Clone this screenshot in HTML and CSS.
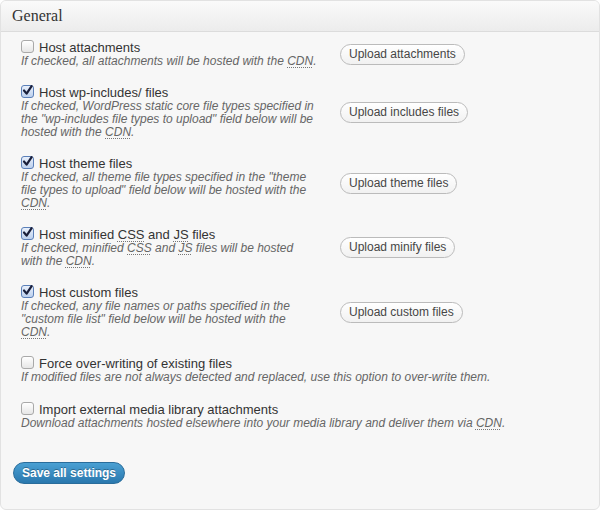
FILE: index.html
```html
<!DOCTYPE html>
<html>
<head>
<meta charset="utf-8">
<link rel="stylesheet" href="styles.css">
</head>
<body>
<div class="postbox">
  <h3 class="hndle">General</h3>
  <div class="inside">
    <div class="row">
      <div class="opt">
        <label class="lbl"><span class="cb"></span>Host attachments</label>
        <div class="desc">If checked, all attachments will be hosted with the <abbr>CDN</abbr>.</div>
      </div>
      <div class="act"><button class="btn">Upload attachments</button></div>
    </div>
    <div class="row">
      <div class="opt">
        <label class="lbl"><span class="cb on"><svg viewBox="0 0 13 13" width="13" height="13"><path d="M3 6.5 L5.6 9.6 L10.6 2.2" fill="none" stroke="#1a1f3a" stroke-width="2.2" stroke-linecap="round" stroke-linejoin="round"/></svg></span>Host wp-includes/ files</label>
        <div class="desc">If checked, WordPress static core file types specified in the "wp-includes file types to upload" field below will be hosted with the <abbr>CDN</abbr>.</div>
      </div>
      <div class="act"><button class="btn">Upload includes files</button></div>
    </div>
    <div class="row">
      <div class="opt">
        <label class="lbl"><span class="cb on"><svg viewBox="0 0 13 13" width="13" height="13"><path d="M3 6.5 L5.6 9.6 L10.6 2.2" fill="none" stroke="#1a1f3a" stroke-width="2.2" stroke-linecap="round" stroke-linejoin="round"/></svg></span>Host theme files</label>
        <div class="desc">If checked, all theme file types specified in the "theme file types to upload" field below will be hosted with the <abbr>CDN</abbr>.</div>
      </div>
      <div class="act"><button class="btn">Upload theme files</button></div>
    </div>
    <div class="row">
      <div class="opt">
        <label class="lbl"><span class="cb on"><svg viewBox="0 0 13 13" width="13" height="13"><path d="M3 6.5 L5.6 9.6 L10.6 2.2" fill="none" stroke="#1a1f3a" stroke-width="2.2" stroke-linecap="round" stroke-linejoin="round"/></svg></span>Host minified <abbr>CSS</abbr> and <abbr>JS</abbr> files</label>
        <div class="desc">If checked, minified <abbr>CSS</abbr> and <abbr>JS</abbr> files will be hosted with the <abbr>CDN</abbr>.</div>
      </div>
      <div class="act"><button class="btn">Upload minify files</button></div>
    </div>
    <div class="row">
      <div class="opt">
        <label class="lbl"><span class="cb on"><svg viewBox="0 0 13 13" width="13" height="13"><path d="M3 6.5 L5.6 9.6 L10.6 2.2" fill="none" stroke="#1a1f3a" stroke-width="2.2" stroke-linecap="round" stroke-linejoin="round"/></svg></span>Host custom files</label>
        <div class="desc">If checked, any file names or paths specified in the "custom file list" field below will be hosted with the <abbr>CDN</abbr>.</div>
      </div>
      <div class="act"><button class="btn">Upload custom files</button></div>
    </div>
    <div class="row full">
      <div class="opt">
        <label class="lbl"><span class="cb"></span>Force over-writing of existing files</label>
        <div class="desc">If modified files are not always detected and replaced, use this option to over-write them.</div>
      </div>
    </div>
    <div class="row full">
      <div class="opt">
        <label class="lbl"><span class="cb"></span>Import external media library attachments</label>
        <div class="desc">Download attachments hosted elsewhere into your media library and deliver them via <abbr>CDN</abbr>.</div>
      </div>
    </div>
    <div class="submit">
      <button class="btn-primary">Save all settings</button>
    </div>
  </div>
</div>
</body>
</html>
```
FILE: styles.css
```css
html, body {
  margin: 0;
  padding: 0;
  background: #ffffff;
}
body {
  font-family: "Liberation Sans", Arial, sans-serif;
  color: #333;
}
.postbox {
  box-sizing: border-box;
  width: 600px;
  height: 510px;
  border: 1px solid #e2e2e2;
  border-radius: 6px;
  background: #f7f7f7;
  overflow: hidden;
}
.hndle {
  margin: 0;
  height: 30px;
  line-height: 30px;
  padding-left: 11px;
  font-family: "Liberation Serif", Georgia, serif;
  font-size: 16px;
  font-weight: normal;
  color: #333;
  background: linear-gradient(to bottom, #fafafa, #ececec);
  border-bottom: 1px solid #dcdcdc;
}
.inside {
  padding: 0 0 0 20px;
}
.row {
  display: grid;
  grid-template-columns: 295px auto;
  column-gap: 24px;
  align-items: center;
  padding: 8px 0 9px;
}
.row.full {
  grid-template-columns: 1fr;
  padding-bottom: 10px;
}
.lbl {
  display: block;
  font-size: 13px;
  line-height: 15px;
  color: #333;
}
.cb {
  display: inline-block;
  vertical-align: -1px;
  box-sizing: border-box;
  width: 13px;
  height: 13px;
  margin: 0 5px 0 0;
  border: 1px solid #a9a9a9;
  border-radius: 3px;
  background: linear-gradient(to bottom, #ffffff, #e6e6e6);
  position: relative;
}
.cb.on {
  border-color: #5a7fb8;
  background: linear-gradient(to bottom, #e9f0fb, #bcd0ee);
}
.cb svg {
  position: absolute;
  left: -1px;
  top: -2px;
}
.desc {
  font-size: 12px;
  line-height: 13px;
  font-style: italic;
  color: #666;
}
.row:first-child .desc {
  white-space: nowrap;
}
abbr {
  text-decoration: underline dotted #777;
  text-decoration-thickness: 1px;
  text-underline-offset: 2px;
}
.btn {
  font-family: "Liberation Sans", Arial, sans-serif;
  font-size: 12px;
  line-height: 15px;
  color: #464646;
  padding: 2px 8px 2px;
  border: 1px solid #bbb;
  border-radius: 11px;
  background: linear-gradient(to bottom, #ffffff, #f1f1f1);
}
.act {
  display: flex;
}
.submit {
  padding: 22px 0 0 0;
  margin-left: -8px;
}
.btn-primary {
  font-family: "Liberation Sans", Arial, sans-serif;
  font-size: 12px;
  font-weight: bold;
  line-height: 16px;
  color: #fff;
  text-shadow: 0 -1px 0 rgba(0,0,0,0.3);
  padding: 2px 8px 2px;
  height: 22px;
  border: 1px solid #2a6d9b;
  border-radius: 11px;
  background: linear-gradient(to bottom, #4aa0d3, #2a78ae);
}
```
